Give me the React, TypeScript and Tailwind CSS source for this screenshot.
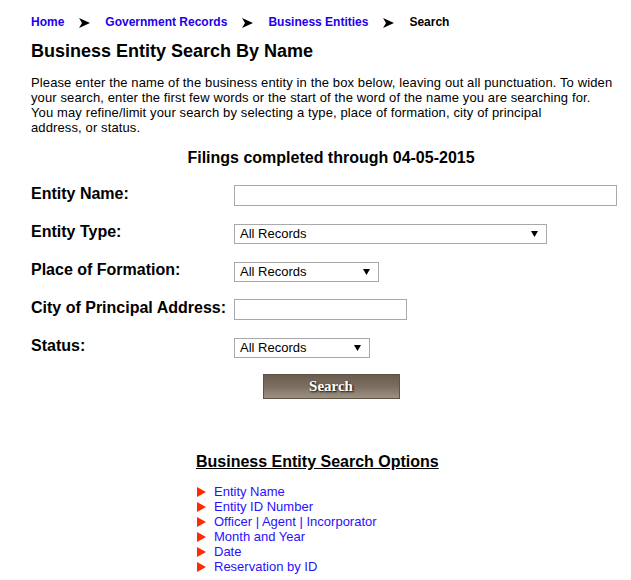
import React from 'react';

const crumbs = [
  { label: 'Home', link: true },
  { label: 'Government Records', link: true },
  { label: 'Business Entities', link: true },
  { label: 'Search', link: false },
];

const options = [
  'Entity Name',
  'Entity ID Number',
  'Officer | Agent | Incorporator',
  'Month and Year',
  'Date',
  'Reservation by ID',
];

const FakeSelect = ({ width }: { width: string }) => (
  <div className={`${width} h-[20px] border border-[#a9a9a9] bg-white flex items-center justify-between pl-[5px] pr-[8px] text-[13px] text-black`}>
    <span>All Records</span>
    <svg width="7" height="6" viewBox="0 0 7 6">
      <path d="M0 0 L7 0 L3.5 6 Z" fill="#000" />
    </svg>
  </div>
);

const FormRow = ({ label, children }: { label: string; children: React.ReactNode }) => (
  <div className="grid grid-cols-[203px_1fr] items-center h-[38px]">
    <span className="font-bold text-[16px] text-black">{label}</span>
    <div className="pt-[3px]">{children}</div>
  </div>
);

export default function App() {
  return (
    <div className="bg-white min-h-[580px] pl-[31px] pt-[15px] font-['Liberation_Sans',Arial,sans-serif] text-black">
      {/* breadcrumb */}
      <div className="flex items-center text-[12px] font-bold leading-[15px]">
        {crumbs.map((c, i) => (
          <React.Fragment key={c.label}>
            <span className={c.link ? 'text-[#2200ee]' : 'text-black'}>{c.label}</span>
            {i < crumbs.length - 1 && (
              <span className="mx-[15px] flex items-center">
                <svg width="11" height="10" viewBox="0 0 11 10">
                  <path d="M0 0 L11 5 L0 10 L3 5 Z" fill="#000" />
                </svg>
              </span>
            )}
          </React.Fragment>
        ))}
      </div>

      <h1 className="mt-[10px] text-[18px] font-bold leading-[22px]">Business Entity Search By Name</h1>

      <p className="mt-[13px] text-[13px] leading-[15px] tracking-[0.12px] whitespace-nowrap">
        Please enter the name of the business entity in the box below, leaving out all punctuation. To widen
        <br />
        your search, enter the first few words or the start of the word of the name you are searching for.
        <br />
        You may refine/limit your search by selecting a type, place of formation, city of principal
        <br />
        address, or status.
      </p>

      <div className="mt-[13px] text-center text-[16px] font-bold leading-[19px]">
        Filings completed through 04-05-2015
      </div>

      <div className="mt-[8px]">
        <FormRow label="Entity Name:">
          <div className="w-[383px] h-[21px] border border-[#a9a9a9] bg-white" />
        </FormRow>
        <FormRow label="Entity Type:">
          <FakeSelect width="w-[313px]" />
        </FormRow>
        <FormRow label="Place of Formation:">
          <FakeSelect width="w-[145px]" />
        </FormRow>
        <FormRow label="City of Principal Address:">
          <div className="w-[173px] h-[21px] border border-[#a9a9a9] bg-white" />
        </FormRow>
        <FormRow label="Status:">
          <FakeSelect width="w-[136px]" />
        </FormRow>
      </div>

      <div className="mt-[9px] flex justify-center">
        <button className="w-[137px] h-[25px] bg-gradient-to-b from-[#6a5d4f] via-[#7c6f61] to-[#9d9184] border border-[#5e5244] text-white font-bold text-[15px] leading-none font-['Liberation_Serif',Georgia,serif] [text-shadow:1px_1px_2px_#000]">
          Search
        </button>
      </div>

      <div className="mt-[53px] pl-[165px]">
        <div className="text-[16px] font-bold underline leading-[19px]">Business Entity Search Options</div>
        <ul className="mt-[13px]">
          {options.map((o) => (
            <li key={o} className="flex items-center h-[15px] text-[13px] leading-[15px]">
              <svg width="9" height="10" viewBox="0 0 9 10" className="ml-[1px] mr-[8px]">
                <path d="M0 0 L9 5 L0 10 Z" fill="#ff2a00" />
              </svg>
              <span className="text-[#2a10ff]">{o}</span>
            </li>
          ))}
        </ul>
      </div>
    </div>
  );
}
